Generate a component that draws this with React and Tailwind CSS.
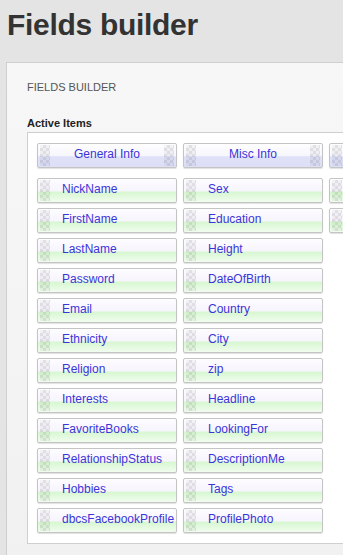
const columns = [
  {
    title: "General Info",
    items: [
      "NickName",
      "FirstName",
      "LastName",
      "Password",
      "Email",
      "Ethnicity",
      "Religion",
      "Interests",
      "FavoriteBooks",
      "RelationshipStatus",
      "Hobbies",
      "dbcsFacebookProfile",
    ],
  },
  {
    title: "Misc Info",
    items: [
      "Sex",
      "Education",
      "Height",
      "DateOfBirth",
      "Country",
      "City",
      "zip",
      "Headline",
      "LookingFor",
      "DescriptionMe",
      "Tags",
      "ProfilePhoto",
    ],
  },
  // third column runs off the right edge, only its handles show
  { title: "", items: ["", ""] },
];

function Handle() {
  return (
    <span className="h-[21px] w-[10px] shrink-0 bg-[conic-gradient(#0000001c_25%,#0000000a_0_50%,#0000001c_0_75%,#0000000a_0)] bg-[length:6px_6px]" />
  );
}

function HeaderItem({ label }) {
  return (
    <div className="flex h-[25px] w-[140px] shrink-0 items-center justify-between rounded-[2px] border border-[#c4c4c4] bg-[linear-gradient(to_bottom,#fefeff_0%,#f6f6fd_50%,#dfe1f8_56%,#dcdff6_100%)] px-[2px] shadow-[0_1px_1px_rgba(0,0,0,0.12)]">
      <Handle />
      {label ? (
        <span className="-mt-[3px] flex-1 truncate text-center text-[12px] text-[#3a35d8]">{label}</span>
      ) : null}
      <Handle />
    </div>
  );
}

function FieldItem({ label }) {
  return (
    <div className="flex h-[25px] w-[140px] shrink-0 items-center rounded-[2px] border border-[#c4c4c4] bg-[linear-gradient(to_bottom,#fdfcff_0%,#f7f5fd_52%,#d7f7d1_57%,#f1fcef_100%)] px-[2px] shadow-[0_1px_1px_rgba(0,0,0,0.12)]">
      <Handle />
      {label ? (
        <span className="-mt-[3px] ml-[12px] whitespace-nowrap text-[12px] text-[#3a35d8]">{label}</span>
      ) : null}
    </div>
  );
}

export default function App() {
  return (
    <div className="h-[555px] w-[343px] overflow-hidden bg-[#e4e4e4] font-['Liberation_Sans',Arial,sans-serif]">
      <h1 className="pl-[7px] pt-[3px] text-[30px] font-bold leading-[44px] tracking-[-0.3px] text-[#333]">
        Fields builder
      </h1>
      <div className="ml-[6px] mt-[15px] w-[600px] border-l border-t border-[#cfcfcf] bg-[linear-gradient(to_bottom,#f7f7f7,#f1f1f1)] pb-[20px] pl-[20px] pt-[17px]">
        <p className="text-[11px] leading-[14px] text-[#555]">FIELDS BUILDER</p>
        <p className="mt-[22px] text-[11px] font-bold leading-[14px] text-[#222]">Active Items</p>
        <div className="mt-[2px] flex gap-[6px] border border-[#cfcfcf] bg-white px-[9px] pb-[10px] pt-[10px]">
          {columns.map((col, i) => (
            <div key={i} className="flex flex-col gap-[5px]">
              <div className="mb-[5px]">
                <HeaderItem label={col.title} />
              </div>
              {col.items.map((item, j) => (
                <FieldItem key={j} label={item} />
              ))}
            </div>
          ))}
        </div>
      </div>
    </div>
  );
}
